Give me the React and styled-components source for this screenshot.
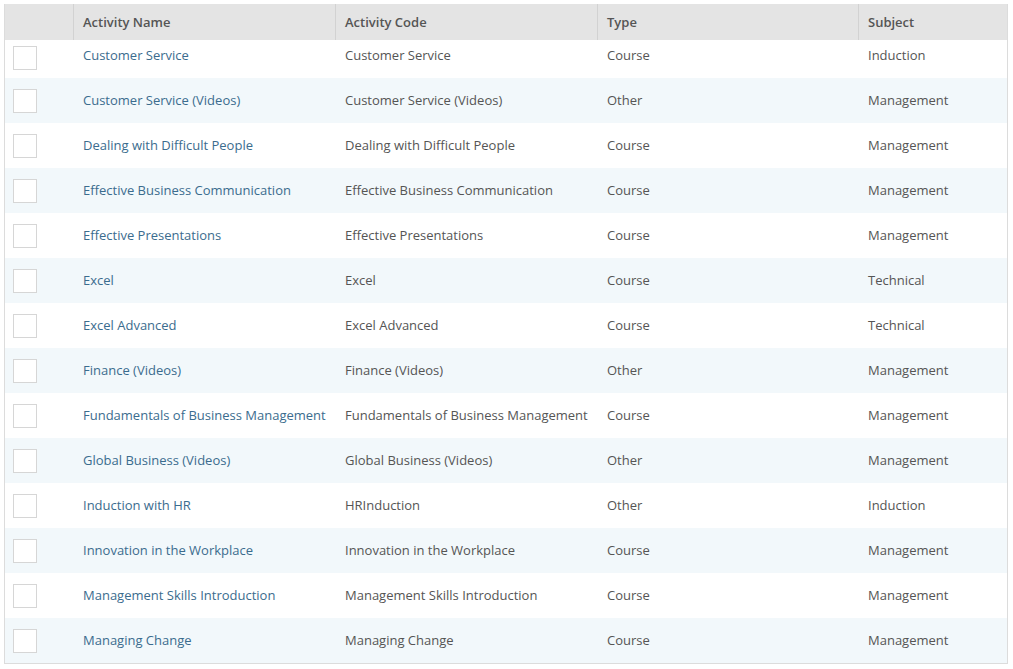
import React from 'react';
import styled, { createGlobalStyle } from 'styled-components';

const Global = createGlobalStyle`
  body { margin: 0; background: #fff; font-family: 'Open Sans', sans-serif; }
`;

const rows = [
  ['Customer Service', 'Customer Service', 'Course', 'Induction'],
  ['Customer Service (Videos)', 'Customer Service (Videos)', 'Other', 'Management'],
  ['Dealing with Difficult People', 'Dealing with Difficult People', 'Course', 'Management'],
  ['Effective Business Communication', 'Effective Business Communication', 'Course', 'Management'],
  ['Effective Presentations', 'Effective Presentations', 'Course', 'Management'],
  ['Excel', 'Excel', 'Course', 'Technical'],
  ['Excel Advanced', 'Excel Advanced', 'Course', 'Technical'],
  ['Finance (Videos)', 'Finance (Videos)', 'Other', 'Management'],
  ['Fundamentals of Business Management', 'Fundamentals of Business Management', 'Course', 'Management'],
  ['Global Business (Videos)', 'Global Business (Videos)', 'Other', 'Management'],
  ['Induction with HR', 'HRInduction', 'Other', 'Induction'],
  ['Innovation in the Workplace', 'Innovation in the Workplace', 'Course', 'Management'],
  ['Management Skills Introduction', 'Management Skills Introduction', 'Course', 'Management'],
  ['Managing Change', 'Managing Change', 'Course', 'Management'],
];

const Wrap = styled.div`
  margin: 4px 5px 0 4px;
  border: 1px solid #dcdcdc;
  border-top: none;
`;

const Grid = styled.div`
  display: grid;
  grid-template-columns: 69px 262px 262px 261px 1fr;
`;

const Head = styled.div`
  height: 36px;
  background: #e4e4e4;
  color: #555;
  font-size: 13px;
  font-weight: 600;
  display: flex;
  align-items: center;
  padding-left: 9px;
  border-left: ${p => (p.$first ? 'none' : '1px solid #d2d2d2')};
  margin-left: ${p => (p.$first ? '0' : '-1px')};
`;

const Cell = styled.div`
  height: ${p => (p.$first ? '38px' : '45px')};
  padding-top: ${p => (p.$first ? '5px' : '12px')};
  box-sizing: border-box;
  background: ${p => (p.$odd ? '#f2f8fb' : '#fff')};
  padding-left: 9px;
  font-size: 13px;
  line-height: 20px;
  color: ${p => (p.$link ? '#3b6c8e' : '#555')};
  white-space: nowrap;
`;

const BoxCell = styled(Cell)`
  padding-left: 8px;
  padding-top: ${p => (p.$first ? '6px' : '11px')};
`;

const Box = styled.div`
  width: 22px;
  height: 22px;
  border: 1px solid #d6d6d6;
  background: #fff;
`;

export default function App() {
  return (
    <Wrap>
      <Global />
      <Grid>
        <Head $first />
        <Head>Activity Name</Head>
        <Head>Activity Code</Head>
        <Head>Type</Head>
        <Head>Subject</Head>
        {rows.map((r, i) => {
          const odd = i % 2 === 1;
          const first = i === 0;
          return (
            <React.Fragment key={i}>
              <BoxCell $odd={odd} $first={first}><Box /></BoxCell>
              <Cell $odd={odd} $first={first} $link>{r[0]}</Cell>
              <Cell $odd={odd} $first={first}>{r[1]}</Cell>
              <Cell $odd={odd} $first={first}>{r[2]}</Cell>
              <Cell $odd={odd} $first={first}>{r[3]}</Cell>
            </React.Fragment>
          );
        })}
      </Grid>
    </Wrap>
  );
}
